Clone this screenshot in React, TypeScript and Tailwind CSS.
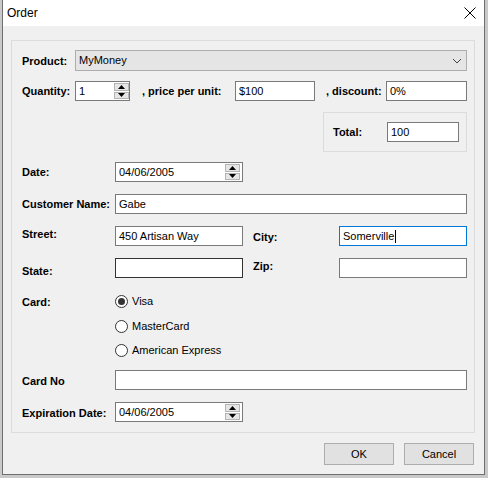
import React from "react";

const lbl = "font-bold text-[11px] leading-[20px] text-black whitespace-nowrap";
const box = "flex h-[20px] items-center border border-[#7a7a7a] bg-white pl-[3px] text-[11px] text-black";

function Arrow({ up }: { up?: boolean }) {
	return (
		<svg width="7" height="4" viewBox="0 0 7 4">
			<path d={up ? "M3.5 0L7 4H0z" : "M0 0H7L3.5 4z"} fill="#000" />
		</svg>
	);
}

function Spinner({ right = 1 }: { right?: number }) {
	return (
		<div className={`flex h-full w-[15px] flex-col gap-px py-px ${right === 1 ? "mr-0" : "mr-[2px]"}`}>
			<div className="flex flex-1 items-center justify-center border border-[#b4b4b4] bg-[#e6e6e6]">
				<Arrow up />
			</div>
			<div className="flex flex-1 items-center justify-center border border-[#b4b4b4] bg-[#e6e6e6]">
				<Arrow />
			</div>
		</div>
	);
}

function DateBox({ value }: { value: string }) {
	return (
		<div className={`${box} w-[128px] justify-between`}>
			<span>{value}</span>
			<Spinner right={2} />
		</div>
	);
}

function Radio({ label, checked }: { label: string; checked?: boolean }) {
	return (
		<div className="flex h-[13px] items-center gap-[4px] text-[11px] text-black">
			<div className="flex h-[13px] w-[13px] items-center justify-center rounded-full border border-[#333] bg-white">
				{checked && <div className="h-[7px] w-[7px] rounded-full bg-[#333]" />}
			</div>
			<span>{label}</span>
		</div>
	);
}

export default function App() {
	return (
		<div className="flex h-[478px] w-[488px] bg-[#c9c9c9] pl-[2px] font-['Liberation_Sans',Arial,sans-serif]">
			<div className="flex h-[475px] w-[483px] flex-col border-x border-b border-[#6f6f6f] bg-[#f0f0f0]">
				{/* title bar */}
				<div className="flex h-[26px] items-center justify-between bg-white pl-[4px] pr-[8px]">
					<span className="text-[12px] text-black">Order</span>
					<svg width="12" height="12" viewBox="0 0 12 12">
						<path d="M0.5 0.5L11.5 11.5M11.5 0.5L0.5 11.5" stroke="#000" strokeWidth="1" />
					</svg>
				</div>

				{/* group box */}
				<div className="ml-[8px] mt-[14px] flex h-[393px] w-[464px] flex-col border border-[#dcdcdc] pl-[10px]">
					<div className="mt-[9px] flex h-[21px] items-center">
						<span className={`${lbl} w-[53px]`}>Product:</span>
						<div className="flex h-[21px] w-[392px] items-center justify-between border border-[#adadad] bg-[#e5e5e5] pl-[3px] pr-[4px] text-[11px] text-black">
							<span>MyMoney</span>
							<svg width="10" height="6" viewBox="0 0 10 6">
								<path d="M1 1L5 5L9 1" stroke="#444" fill="none" strokeWidth="1" />
							</svg>
						</div>
					</div>

					<div className="mt-[10px] flex h-[20px] items-center">
						<span className={`${lbl} w-[53px]`}>Quantity:</span>
						<div className={`${box} w-[55px] justify-between`}>
							<span>1</span>
							<Spinner />
						</div>
						<span className={`${lbl} ml-[12px] w-[93px]`}>, price per unit:</span>
						<div className={`${box} w-[80px]`}>$100</div>
						<span className={`${lbl} ml-[11px] w-[60px]`}>, discount:</span>
						<div className={`${box} w-[81px]`}>0%</div>
					</div>

					<div className="ml-[301px] mt-[11px] flex h-[40px] w-[144px] items-center border border-[#dcdcdc] pl-[9px]">
						<span className={`${lbl} w-[54px]`}>Total:</span>
						<div className={`${box} w-[72px]`}>100</div>
					</div>

					<div className="mt-[10px] flex h-[20px] items-center">
						<span className={`${lbl} w-[93px]`}>Date:</span>
						<DateBox value="04/06/2005" />
					</div>

					<div className="mt-[12px] flex h-[20px] items-center">
						<span className={`${lbl} w-[93px]`}>Customer Name:</span>
						<div className={`${box} w-[352px]`}>Gabe</div>
					</div>

					<div className="mt-[12px] flex h-[20px] items-center">
						<span className={`${lbl} mb-[4px] w-[93px]`}>Street:</span>
						<div className={`${box} w-[128px]`}>450 Artisan Way</div>
						<span className={`${lbl} ml-[10px] mt-[2px] w-[86px]`}>City:</span>
						<div className="flex h-[20px] w-[128px] items-center border border-[#0078d7] bg-white pl-[3px] text-[11px] text-black">
							<span>Somerville</span>
							<span className="ml-px h-[13px] w-px bg-black" />
						</div>
					</div>

					<div className="mt-[12px] flex h-[20px] items-center">
						<span className={`${lbl} mt-[6px] w-[93px]`}>State:</span>
						<div className={`${box} w-[128px] border-[#333]`} />
						<span className={`${lbl} mb-[4px] ml-[10px] w-[86px]`}>Zip:</span>
						<div className={`${box} w-[128px]`} />
					</div>

					<div className="mt-[17px] flex h-[13px] items-center">
						<span className={`${lbl} w-[93px]`}>Card:</span>
						<Radio label="Visa" checked />
					</div>
					<div className="ml-[93px] mt-[12px]">
						<Radio label="MasterCard" />
					</div>
					<div className="ml-[93px] mt-[11px]">
						<Radio label="American Express" />
					</div>

					<div className="mt-[13px] flex h-[20px] items-center">
						<span className={`${lbl} mt-[2px] w-[93px]`}>Card No</span>
						<div className={`${box} w-[352px]`} />
					</div>

					<div className="mt-[12px] flex h-[20px] items-center">
						<span className={`${lbl} mt-[2px] w-[93px]`}>Expiration Date:</span>
						<DateBox value="04/06/2005" />
					</div>
				</div>

				{/* buttons */}
				<div className="mt-[10px] flex justify-end gap-[10px] pr-[10px]">
					<button className="flex h-[22px] w-[70px] items-center justify-center border border-[#adadad] bg-[#e1e1e1] text-[11px] text-black">
						OK
					</button>
					<button className="flex h-[22px] w-[70px] items-center justify-center border border-[#adadad] bg-[#e1e1e1] text-[11px] text-black">
						Cancel
					</button>
				</div>
			</div>
		</div>
	);
}
